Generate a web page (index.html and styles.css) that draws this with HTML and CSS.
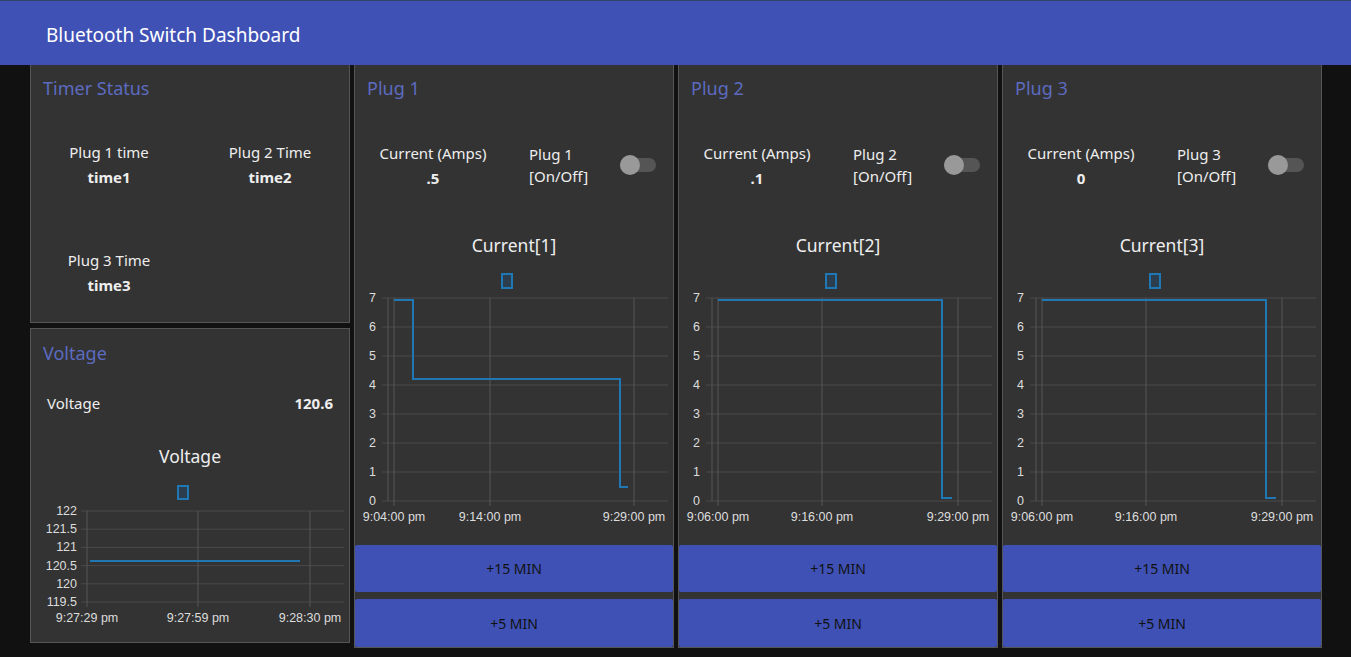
FILE: index.html
```html
<!DOCTYPE html>
<html lang="en">
<head>
<meta charset="utf-8">
<title>Bluetooth Switch Dashboard</title>
<link rel="stylesheet" href="styles.css">
</head>
<body>
<header class="topbar">Bluetooth Switch Dashboard</header>
<main class="board">
  <div class="col">
    <section class="card card-flush timer-card">
      <div class="card-head">Timer Status</div>
      <div class="timer-grid">
        <div class="stat"><div class="stat-label">Plug 1 time</div><div class="stat-value">time1</div></div>
        <div class="stat"><div class="stat-label">Plug 2 Time</div><div class="stat-value">time2</div></div>
        <div class="stat"><div class="stat-label">Plug 3 Time</div><div class="stat-value">time3</div></div>
      </div>
    </section>
    <section class="card volt-card">
      <div class="card-head volt-head">Voltage</div>
      <div class="volt-row"><span>Voltage</span><b>120.6</b></div>
      <div class="chart-title volt-title">Voltage</div>
      <svg class="chart volt-chart" width="318" height="150" viewBox="0 0 318 150">
        <rect class="legend" x="147" y="6" width="10" height="13"/>
        <g class="grid-h">
          <line x1="50" y1="31" x2="313" y2="31"/>
          <line x1="50" y1="49.2" x2="313" y2="49.2"/>
          <line x1="50" y1="67.4" x2="313" y2="67.4"/>
          <line x1="50" y1="85.6" x2="313" y2="85.6"/>
          <line x1="50" y1="103.8" x2="313" y2="103.8"/>
          <line x1="50" y1="122" x2="313" y2="122"/>
        </g>
        <g class="grid-v">
          <line x1="56" y1="31" x2="56" y2="127"/>
          <line x1="167" y1="31" x2="167" y2="127"/>
          <line x1="279" y1="31" x2="279" y2="127"/>
        </g>
        <g class="ylab">
          <text x="46" y="35">122</text>
          <text x="46" y="53.2">121.5</text>
          <text x="46" y="71.4">121</text>
          <text x="46" y="89.6">120.5</text>
          <text x="46" y="107.8">120</text>
          <text x="46" y="126">119.5</text>
        </g>
        <g class="xlab">
          <text x="56" y="142">9:27:29 pm</text>
          <text x="167" y="142">9:27:59 pm</text>
          <text x="279" y="142">9:28:30 pm</text>
        </g>
        <polyline class="series" points="59,81 269,81"/>
      </svg>
    </section>
  </div>

  <section class="card card-flush plug-card">
    <div class="card-head">Plug 1</div>
    <div class="plug-row">
      <div class="stat"><div class="stat-label">Current (Amps)</div><div class="stat-value">.5</div></div>
      <div class="switch-cell"><div class="switch-label">Plug 1<br>[On/Off]</div><div class="toggle"><span class="knob"></span></div></div>
    </div>
    <div class="chart-title">Current[1]</div>
    <svg class="chart" width="318" height="268" viewBox="0 0 318 268">
      <rect class="legend" x="147" y="12" width="10" height="14"/>
      <g class="grid-h">
        <line x1="27" y1="36" x2="313" y2="36"/><line x1="27" y1="65" x2="313" y2="65"/>
        <line x1="27" y1="94" x2="313" y2="94"/><line x1="27" y1="123" x2="313" y2="123"/>
        <line x1="27" y1="152" x2="313" y2="152"/><line x1="27" y1="181" x2="313" y2="181"/>
        <line x1="27" y1="210" x2="313" y2="210"/><line x1="27" y1="239" x2="313" y2="239"/>
      </g>
      <g class="grid-v">
        <line x1="33" y1="36" x2="33" y2="239"/>
        <line x1="39" y1="36" x2="39" y2="244"/>
        <line x1="135" y1="36" x2="135" y2="244"/>
        <line x1="279" y1="36" x2="279" y2="244"/>
      </g>
      <g class="ylab">
        <text x="21" y="40">7</text><text x="21" y="69">6</text><text x="21" y="98">5</text><text x="21" y="127">4</text>
        <text x="21" y="156">3</text><text x="21" y="185">2</text><text x="21" y="214">1</text><text x="21" y="243">0</text>
      </g>
      <g class="xlab">
        <text x="39" y="259">9:04:00 pm</text><text x="135" y="259">9:14:00 pm</text><text x="279" y="259">9:29:00 pm</text>
      </g>
      <polyline class="series" points="39,38 58,38 58,117 265,117 265,225 273,225"/>
    </svg>
    <div class="actions">
      <button class="btn">+15 MIN</button>
      <button class="btn">+5 MIN</button>
    </div>
  </section>

  <section class="card card-flush plug-card">
    <div class="card-head">Plug 2</div>
    <div class="plug-row">
      <div class="stat"><div class="stat-label">Current (Amps)</div><div class="stat-value">.1</div></div>
      <div class="switch-cell"><div class="switch-label">Plug 2<br>[On/Off]</div><div class="toggle"><span class="knob"></span></div></div>
    </div>
    <div class="chart-title">Current[2]</div>
    <svg class="chart" width="318" height="268" viewBox="0 0 318 268">
      <rect class="legend" x="147" y="12" width="10" height="14"/>
      <g class="grid-h">
        <line x1="27" y1="36" x2="313" y2="36"/><line x1="27" y1="65" x2="313" y2="65"/>
        <line x1="27" y1="94" x2="313" y2="94"/><line x1="27" y1="123" x2="313" y2="123"/>
        <line x1="27" y1="152" x2="313" y2="152"/><line x1="27" y1="181" x2="313" y2="181"/>
        <line x1="27" y1="210" x2="313" y2="210"/><line x1="27" y1="239" x2="313" y2="239"/>
      </g>
      <g class="grid-v">
        <line x1="33" y1="36" x2="33" y2="239"/>
        <line x1="39" y1="36" x2="39" y2="244"/>
        <line x1="143" y1="36" x2="143" y2="244"/>
        <line x1="279" y1="36" x2="279" y2="244"/>
      </g>
      <g class="ylab">
        <text x="21" y="40">7</text><text x="21" y="69">6</text><text x="21" y="98">5</text><text x="21" y="127">4</text>
        <text x="21" y="156">3</text><text x="21" y="185">2</text><text x="21" y="214">1</text><text x="21" y="243">0</text>
      </g>
      <g class="xlab">
        <text x="39" y="259">9:06:00 pm</text><text x="143" y="259">9:16:00 pm</text><text x="279" y="259">9:29:00 pm</text>
      </g>
      <polyline class="series" points="39,38 263,38 263,236 273,236"/>
    </svg>
    <div class="actions">
      <button class="btn">+15 MIN</button>
      <button class="btn">+5 MIN</button>
    </div>
  </section>

  <section class="card card-flush plug-card">
    <div class="card-head">Plug 3</div>
    <div class="plug-row">
      <div class="stat"><div class="stat-label">Current (Amps)</div><div class="stat-value">0</div></div>
      <div class="switch-cell"><div class="switch-label">Plug 3<br>[On/Off]</div><div class="toggle"><span class="knob"></span></div></div>
    </div>
    <div class="chart-title">Current[3]</div>
    <svg class="chart" width="318" height="268" viewBox="0 0 318 268">
      <rect class="legend" x="147" y="12" width="10" height="14"/>
      <g class="grid-h">
        <line x1="27" y1="36" x2="313" y2="36"/><line x1="27" y1="65" x2="313" y2="65"/>
        <line x1="27" y1="94" x2="313" y2="94"/><line x1="27" y1="123" x2="313" y2="123"/>
        <line x1="27" y1="152" x2="313" y2="152"/><line x1="27" y1="181" x2="313" y2="181"/>
        <line x1="27" y1="210" x2="313" y2="210"/><line x1="27" y1="239" x2="313" y2="239"/>
      </g>
      <g class="grid-v">
        <line x1="33" y1="36" x2="33" y2="239"/>
        <line x1="39" y1="36" x2="39" y2="244"/>
        <line x1="143" y1="36" x2="143" y2="244"/>
        <line x1="279" y1="36" x2="279" y2="244"/>
      </g>
      <g class="ylab">
        <text x="21" y="40">7</text><text x="21" y="69">6</text><text x="21" y="98">5</text><text x="21" y="127">4</text>
        <text x="21" y="156">3</text><text x="21" y="185">2</text><text x="21" y="214">1</text><text x="21" y="243">0</text>
      </g>
      <g class="xlab">
        <text x="39" y="259">9:06:00 pm</text><text x="143" y="259">9:16:00 pm</text><text x="279" y="259">9:29:00 pm</text>
      </g>
      <polyline class="series" points="39,38 263,38 263,236 273,236"/>
    </svg>
    <div class="actions">
      <button class="btn">+15 MIN</button>
      <button class="btn">+5 MIN</button>
    </div>
  </section>
</main>
</body>
</html>
```

FILE: styles.css
```css
* { box-sizing: border-box; }
html, body { margin: 0; padding: 0; }
body {
  background: #111111;
  color: #eeeeee;
  font-family: "Noto Sans", "Open Sans", sans-serif;
  font-size: 15px;
  height: 657px;
  overflow: hidden;
}
.topbar {
  height: 65px;
  background: #3f51b5;
  border-top: 1px solid #2f4668;
  color: #ffffff;
  font-size: 19px;
  padding: 4px 0 0 46px;
  display: flex;
  align-items: center;
}
.board {
  display: flex;
  gap: 4px;
  padding-left: 30px;
}
.col {
  display: flex;
  flex-direction: column;
  gap: 5px;
  width: 320px;
}
.card {
  background: #333333;
  border: 1px solid #555555;
  width: 320px;
  display: flex;
  flex-direction: column;
}
.card-flush { border-top: 0; }
.card-head {
  height: 48px;
  padding: 11px 12px 0 12px;
  font-size: 18px;
  line-height: 24px;
  color: #5c6bc0;
}
.timer-card { height: 258px; }
.timer-grid {
  display: grid;
  grid-template-columns: 144px 1fr;
  column-gap: 16px;
  row-gap: 58px;
  padding: 27px 6px 0 6px;
}
.stat { text-align: center; line-height: 25px; }
.stat-value { font-weight: bold; }

.volt-card { height: 315px; }
.volt-head { height: 48px; padding-top: 12px; }
.volt-row {
  display: flex;
  justify-content: space-between;
  padding: 14px 16px 0 16px;
  line-height: 24px;
  height: 53px;
}
.chart-title {
  height: 47px;
  padding-top: 18px;
  line-height: 24px;
  font-size: 17.5px;
  text-align: center;
  color: #eeeeee;
}
.volt-title { height: 50px; padding-top: 14px; }

.plug-card { height: 583px; }
.plug-row {
  height: 102px;
  display: grid;
  grid-template-columns: 144px 1fr;
  padding: 28px 6px 0 6px;
}
.switch-cell {
  display: flex;
  align-items: center;
  justify-content: space-between;
  align-self: start;
  margin-top: 2px;
  padding: 0 11px 0 24px;
}
.switch-label { line-height: 22px; }
.toggle {
  position: relative;
  width: 36px;
  height: 14px;
  border-radius: 7px;
  background: #555555;
}
.knob {
  position: absolute;
  left: 0;
  top: -3px;
  width: 20px;
  height: 20px;
  border-radius: 50%;
  background: #999999;
}

.chart { display: block; }
.chart text { font-family: "Liberation Sans", Arial, sans-serif; font-size: 12.5px; fill: #dddddd; }
.ylab text { text-anchor: end; }
.xlab text { text-anchor: middle; }
.grid-h line { stroke: #4a4a4a; stroke-width: 1; }
.grid-v line { stroke: #575757; stroke-width: 1; }
.legend { fill: #2c3e4e; stroke: #1f77b4; stroke-width: 2; }
.series { fill: none; stroke: #1f77b4; stroke-width: 2; }

.actions {
  margin-top: auto;
  display: flex;
  flex-direction: column;
  gap: 7px;
}
.btn {
  height: 47px;
  border: 0;
  border-radius: 2px;
  background: #3f51b5;
  color: #111111;
  font-family: "Noto Sans", "Open Sans", sans-serif;
  font-size: 14px;
  padding: 0;
  width: 100%;
}
.btn + .btn { height: 48px; }
```
